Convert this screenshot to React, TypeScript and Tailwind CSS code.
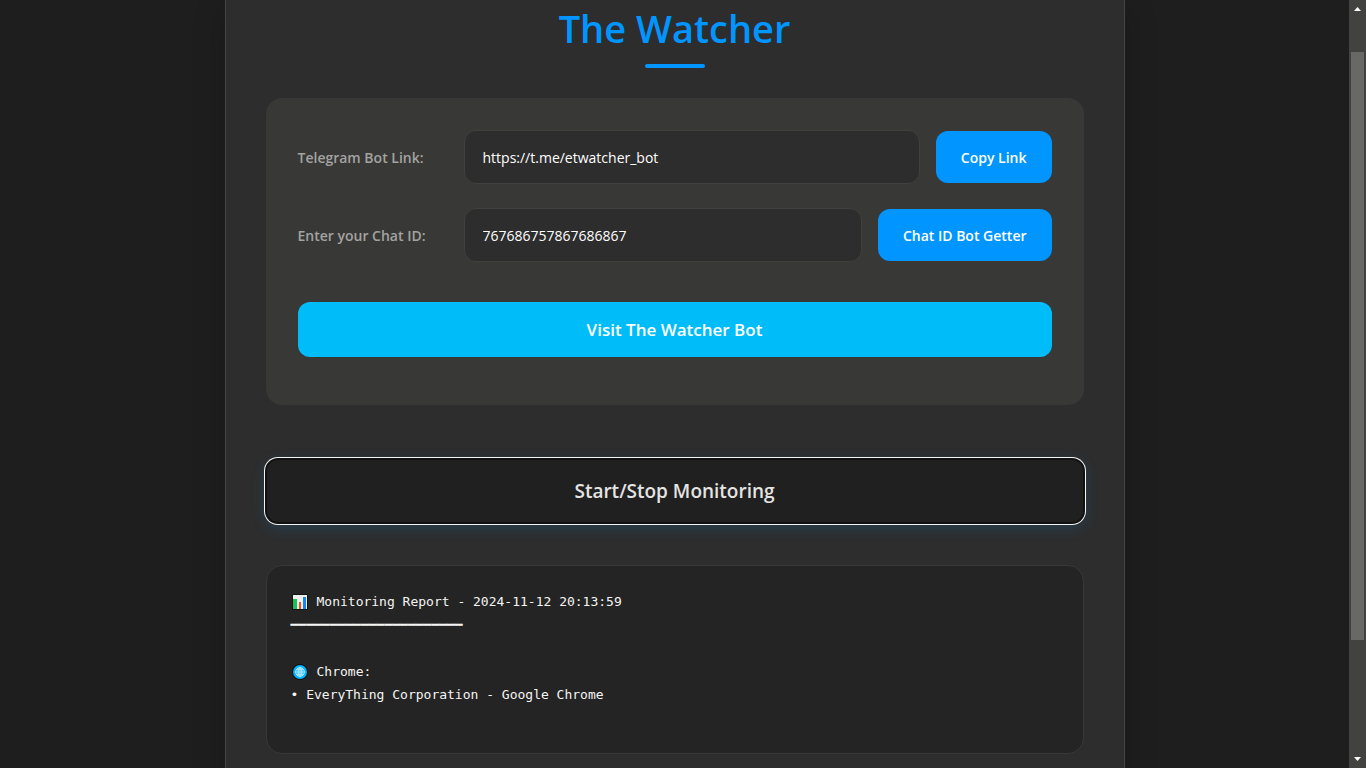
import React from "react";

function ChartIcon() {
  return (
    <svg className="h-4 w-4 shrink-0" viewBox="0 0 16 16" role="img" aria-label="Chart">
      <rect x="0" y="0" width="16" height="16" rx="1" fill="#111111" />
      <rect x="1" y="1" width="14" height="14" fill="#efefef" />
      <rect x="1" y="5" width="4" height="10" fill="#16c35a" />
      <rect x="7" y="8" width="2" height="7" fill="#f4501e" />
      <rect x="11" y="3" width="3" height="12" fill="#1583f0" />
    </svg>
  );
}

function GlobeIcon() {
  return (
    <svg className="h-4 w-4 shrink-0" viewBox="0 0 16 16" role="img" aria-label="Globe">
      <circle cx="8" cy="8" r="8" fill="#111111" />
      <circle cx="8" cy="8" r="7" fill="#00b4ff" />
      <g fill="none" stroke="#d6f3ff" strokeWidth="0.8">
        <ellipse cx="8" cy="8" rx="2" ry="4.4" />
        <circle cx="8" cy="8" r="4.4" />
        <path d="M3.6 8h8.8M4.4 5.8h7.2M4.4 10.2h7.2M8 3.6v8.8" />
      </g>
    </svg>
  );
}

const inputClass =
  "h-[54px] min-w-0 flex-1 rounded-xl border border-[#40403f] bg-[#2d2d2d] px-[18px] text-[14px] text-white outline-none";
const buttonClass =
  "h-[52px] shrink-0 rounded-xl bg-[#0095ff] px-[25px] text-[14px] font-semibold text-white";
const labelClass = "w-[150px] shrink-0 text-[14px] font-semibold text-[#a3a3a1]";

function Scrollbar() {
  return (
    <div className="flex w-[17px] shrink-0 flex-col items-center justify-between bg-[#424240]" aria-hidden="true">
      <svg className="h-[17px] w-[17px]" viewBox="0 0 17 17">
        <path d="M8.5 7 12 11H5z" fill="#fff" />
      </svg>
      <div className="mt-[35px] w-[13px] flex-1 bg-[#686866]" />
      <svg className="mt-[111px] h-[17px] w-[17px]" viewBox="0 0 17 17">
        <path d="M5 6h7L8.5 10z" fill="#fff" />
      </svg>
    </div>
  );
}

export default function App() {
  return (
    <div className="flex h-screen overflow-hidden bg-[#1e1e1e] font-['Open_Sans','Noto_Sans',sans-serif]">
      <main className="flex-1 overflow-hidden">
        <div className="mx-auto min-h-screen max-w-[900px] border-x border-[#444443] bg-[#2d2d2d] px-10 pb-10 shadow-[0_8px_32px_rgba(0,0,0,0.2)]">
          <header className="flex flex-col items-center pb-[30px]">
            <h1 className="text-[38px] leading-[56px] font-semibold text-[#0095ff]">The Watcher</h1>
            <div className="mt-2 h-1 w-[60px] rounded-xs bg-[#0095ff]" />
          </header>

          <section className="flex flex-col gap-6 rounded-2xl bg-[#383836] px-8 pt-8 pb-12">
            <div className="flex items-center gap-4">
              <label htmlFor="bot-link" className={labelClass}>Telegram Bot Link:</label>
              <input id="bot-link" className={inputClass} readOnly value="https://t.me/etwatcher_bot" />
              <button type="button" className={buttonClass}>Copy Link</button>
            </div>
            <div className="flex items-center gap-4">
              <label htmlFor="chat-id" className={labelClass}>Enter your Chat ID:</label>
              <input id="chat-id" className={inputClass} defaultValue="767686757867686867" />
              <button type="button" className={buttonClass}>Chat ID Bot Getter</button>
            </div>
            <button type="button" className="mt-4 h-[55px] w-full rounded-xl bg-[#00bdfa] text-[17px] font-semibold text-white">
              Visit The Watcher Bot
            </button>
          </section>

          <button
            type="button"
            className="mt-[54px] h-16 w-full rounded-xl bg-[#202020] text-[19px] font-semibold text-[#e4e4e2] shadow-[inset_0_0_0_1px_#111111,0_0_0_1px_#111111,0_0_0_2px_#f4f4f2,0_4px_15px_rgba(0,149,255,0.2)]"
          >
            Start/Stop Monitoring
          </button>

          <section className="mt-[42px] min-h-[189px] rounded-2xl border border-[#383838] bg-[#242424] px-6 py-6 font-['DejaVu_Sans_Mono',monospace] text-[13px] leading-[23px] text-[#f5f5f3]">
            <p className="flex items-center gap-[9px] pl-px">
              <ChartIcon />
              Monitoring Report - 2024-11-12 20:13:59
            </p>
            <p>━━━━━━━━━━━━━━━━━━━━━━</p>
            <p className="mt-6 flex items-center gap-[9px] pl-px">
              <GlobeIcon />
              Chrome:
            </p>
            <p>• EveryThing Corporation - Google Chrome</p>
          </section>
        </div>
      </main>
      <Scrollbar />
    </div>
  );
}
